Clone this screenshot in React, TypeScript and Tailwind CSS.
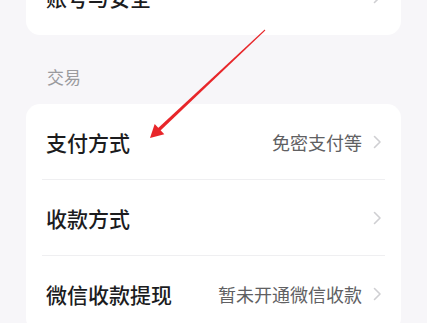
import React from "react";

const Chevron = () => (
  <svg width="9" height="14" viewBox="0 0 9 14" className="shrink-0">
    <path d="M1.5 1.5 L7 7 L1.5 12.5" fill="none" stroke="#cfcfd2" strokeWidth="1.6" strokeLinecap="round" strokeLinejoin="round" />
  </svg>
);

const Row = ({ title, value, divider }: { title: string; value?: string; divider?: boolean }) => (
  <div className="relative h-[76px] flex items-center pl-[20px] pr-[19px]">
    <span className="text-[21px] font-medium text-[#1c1c1e] leading-none">{title}</span>
    <div className="ml-auto flex items-center gap-[11px]">
      {value && <span className="text-[18px] text-[#606062] leading-none">{value}</span>}
      <Chevron />
    </div>
    {divider && <div className="absolute left-[16px] right-[16px] bottom-0 h-px bg-[#efeff1]" />}
  </div>
);

export default function App() {
  return (
    <div
      className="relative w-[427px] h-[323px] overflow-hidden bg-[#f7f6f9] px-[26px]"
      style={{ fontFamily: '"Noto Sans CJK SC", "Noto Sans", sans-serif' }}
    >
      <div className="-mt-[41px] bg-white rounded-[14px]">
        <Row title="账号与安全" />
      </div>
      <div className="h-[69px] pt-[33px] pl-[21px]">
        <div className="text-[17px] text-[#9a9a9e] leading-none">交易</div>
      </div>
      <div className="bg-white rounded-[14px]">
        <Row title="支付方式" value="免密支付等" divider />
        <Row title="收款方式" divider />
        <Row title="微信收款提现" value="暂未开通微信收款" />
      </div>
      <svg className="absolute left-0 top-0 pointer-events-none" width="427" height="323" viewBox="0 0 427 323">
        <polygon points="265.3,30.4 264.7,29.6 156.8,129.2 159.2,131.8" fill="#e8262a" />
        <polygon points="150,138 164.3,134.2 154.7,124.0" fill="#e8262a" />
      </svg>
    </div>
  );
}
